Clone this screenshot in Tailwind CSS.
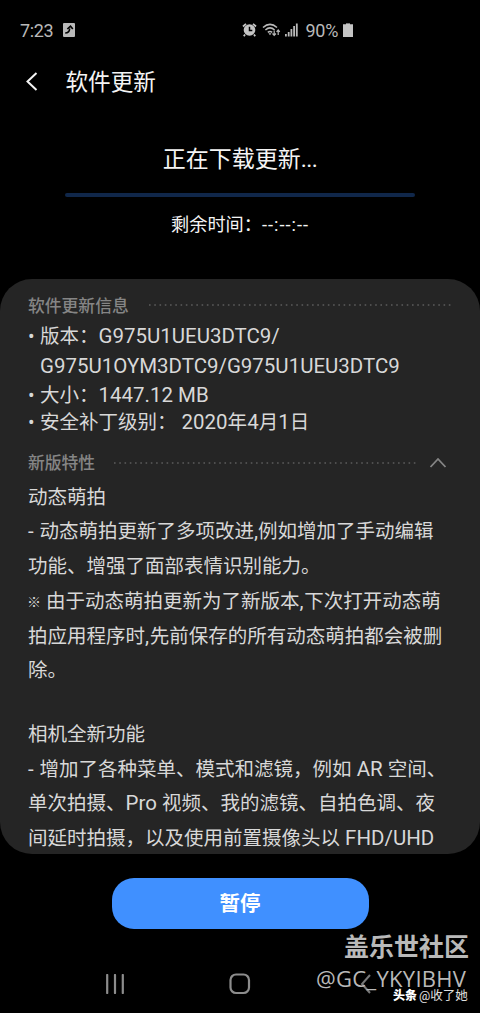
<!DOCTYPE html>
<html lang="zh-CN">
<head>
<meta charset="utf-8">
<title>软件更新</title>
<script src="https://cdn.jsdelivr.net/npm/@tailwindcss/browser@4"></script>
</head>
<body class="bg-black">
<div class="relative w-[480px] h-[1013px] bg-black overflow-hidden flex flex-col whitespace-nowrap font-[Roboto,'Noto_Sans_CJK_SC',sans-serif] text-[#d8d8d8]">
  <header class="h-[60px] flex items-center shrink-0 pl-5 text-[#b9b9b9]">
    <span class="w-[43px] text-[18px] tracking-[-0.4px]">7:23</span>
    <svg class="w-3 h-[14px]" viewBox="0 0 12 14"><rect width="12" height="14" rx="1" fill="#b9b9b9"/><path d="M2.2 10C5 10 6.5 8.5 6.7 5.5M4.3 6L7.5 3.2L9.8 6" fill="none" stroke="#000" stroke-width="1.6"/></svg>
    <svg class="w-[15px] h-4 ml-[167px]" viewBox="0 0 15 16"><circle cx="7.5" cy="8" r="5.8" fill="#c4c4c4"/><path d="M1 4.5L4 1.8M14 4.5L11 1.8M3 12.5L1.8 14.2M12 12.5L13.2 14.2" stroke="#c4c4c4" stroke-width="1.8"/><path d="M7.5 4.8V8.4H10.3" fill="none" stroke="#000" stroke-width="1.5"/></svg>
    <svg class="w-[19px] h-4 ml-[5px]" viewBox="0 0 19 16"><g fill="none" stroke="#b9b9b9" stroke-width="1.5"><path d="M1 5.5Q8 -0.8 15 5.5"/><path d="M3.4 8Q8 3.8 12.6 8"/><path d="M5.8 10.3Q8 8.5 10.2 10.3"/></g><path d="M6.5 11.3H9.5L8 13.3Z" fill="#b9b9b9"/><path d="M12.2 8.5V13M10.5 11.5L12.2 13.4L13.9 11.5M16.2 13V8.2M14.6 9.8L16.2 8L17.8 9.8" fill="none" stroke="#b9b9b9" stroke-width="1.2"/></svg>
    <svg class="w-[13px] h-[14px] ml-[4px]" viewBox="0 0 13 14" fill="#b9b9b9"><path d="M0 11h1.8v2.5H0zM2.8 9h1.8v4.500H2.800zM5.500 6h1.800v7.500H5.500zM8.200 3h1.800v10.500H8.200zM10.900 0.500h1.800v13H10.900z"/></svg>
    <span class="ml-[7.500px] w-[37px] text-[18px] tracking-[-0.3px]">90%</span>
    <svg class="w-[10px] h-[14px]" viewBox="0 0 10 14"><path d="M3 0H7V1.200H10V14H0V1.200H3Z" fill="#c4c4c4"/><path d="M3 0H7V1H3Z" fill="#777"/></svg>
  </header>
  <div class="h-[43px] flex items-center shrink-0 pl-[25px] text-[#f4f4f4]">
    <svg class="w-[13px] h-5" viewBox="0 0 13 20"><path d="M11.500 1L2.500 9.500L11.500 18" fill="none" stroke="#f4f4f4" stroke-width="2"/></svg>
    <h1 class="ml-[27.500px] pt-[3px] text-[22.6px]">软件更新</h1>
  </div>
  <section class="h-[176px] shrink-0 flex flex-col items-center text-[#f4f4f4]">
    <p class="mt-[39px] h-9 leading-9 text-[23px]">正在下载更新<span class="tracking-[-0.600px]">...</span></p>
    <div class="mt-[14.500px] h-1 w-[350px] rounded-full bg-[#10274a]"></div>
    <p class="mt-[12.500px] h-8 leading-8 text-[18.200px]">剩余时间：<span class="tracking-[1px]">--:--:--</span></p>
  </section>
  <main class="h-[575px] shrink-0 rounded-[32px] bg-[#252525] overflow-hidden pt-[10px] px-7 text-[19.500px] [&_i]:not-italic [&_i]:text-[1.050em] [&_i]:leading-none">
    <div class="h-8 flex items-center text-[16.800px] font-medium text-[#858585]">
      <h2 class="pt-[3px]">软件更新信息</h2>
      <svg class="ml-[20px] w-[303px] h-[2px]"><path d="M0 1H303" stroke="#5c5c5c" stroke-width="1.600" stroke-dasharray="1.600 3.660"/></svg>
    </div>
    <ul class="relative top-px">
      <li class="h-[30px] leading-[30px] flex"><span class="w-3">•</span><span>版本：<i>G975U1UEU3DTC9/</i></span></li>
      <li class="h-[30px] leading-[30px] pl-3"><i>G975U1OYM3DTC9/G975U1UEU3DTC9</i></li>
      <li class="h-[27px] leading-[27px] flex"><span class="w-3">•</span><span>大小：<i>1447.12 MB</i></span></li>
      <li class="h-[28px] leading-[28px] flex"><span class="w-3">•</span><span>安全补丁级别：<i> 2020</i>年<i>4</i>月<i>1</i>日</span></li>
    </ul>
    <div class="mt-[10px] h-[33px] flex items-center text-[16.800px] font-medium text-[#858585]">
      <h2 class="pt-[3px]">新版特性</h2>
      <svg class="ml-[19px] w-[303px] h-[2px]"><path d="M0 1H303" stroke="#5c5c5c" stroke-width="1.600" stroke-dasharray="1.600 3.660"/></svg>
      <svg class="ml-[12px] w-[18px] h-3" viewBox="0 0 18 12"><path d="M1.500 10L9 2L16.500 10" fill="none" stroke="#858585" stroke-width="1.800"/></svg>
    </div>
    <div class="pt-[1.500px] leading-[34.750px]">
      <p>动态萌拍</p>
      <p><i class="tracking-[0.400px]">- </i>动态萌拍更新了多项改进<i>,</i>例如增加了手动编辑</p>
      <p>功能、增强了面部表情识别能力。</p>
      <p class="flex"><span class="w-[18px] text-[14px] font-bold"><span class="relative -left-px">※</span></span><span>由于动态萌拍更新为了新版本<i class="tracking-[0.700px]">,</i>下次打开动态萌</span></p>
      <p>拍应用程序时<i class="tracking-[0.700px]">,</i>先前保存的所有动态萌拍都会被删</p>
      <p>除。</p>
      <p class="mt-[28.750px]">相机全新功能</p>
      <p><i class="tracking-[0.400px]">- </i>增加了各种菜单、模式和滤镜，例如<i> AR </i>空间、</p>
      <p>单次拍摄、<i>Pro </i>视频、我的滤镜、自拍色调、夜</p>
      <p>间延时拍摄，以及使用前置摄像头以<i> FHD/UHD</i></p>
    </div>
  </main>
  <button class="mt-[23.500px] ml-[111.500px] w-[257px] h-[51.500px] pt-[3px] shrink-0 rounded-[22px] bg-[#4090ff] text-white text-[20.500px] font-bold">暂停</button>
  <nav class="mt-[44px] h-[22px] shrink-0 flex items-center text-[#8c8c8c]">
    <svg class="ml-[105px] w-5 h-5" viewBox="0 0 20 20"><path d="M2.200 1V19M10 1V19M17.800 1V19" stroke="currentColor" stroke-width="2.200" stroke-linecap="round"/></svg>
    <svg class="ml-[104px] w-[22px] h-[22px]" viewBox="0 0 22 22"><rect x="1.500" y="1.500" width="18.500" height="18.500" rx="5.500" fill="none" stroke="currentColor" stroke-width="2.200"/></svg>
    <svg class="ml-[109px] w-3 h-5" viewBox="0 0 12 20"><path d="M10 1L2 10L10 19" fill="none" stroke="#777" stroke-width="2"/></svg>
  </nav>
  <div class="absolute right-[11px] top-[933px] h-[30px] leading-[30px] text-[25px] font-bold text-[#b9b9b9]">盖乐世社区</div>
  <div class="absolute left-[316px] top-[963px] h-[30px] leading-[30px] text-[22px] tracking-[0.300px] text-[#b9b9b9] font-['Open_Sans',sans-serif]">@GC_YKYIBHV</div>
  <div class="absolute left-[393px] top-[986px] h-5 leading-5 flex text-white"><span class="w-[26px] text-[12px] font-black">头条</span><span class="text-[12.500px] text-[#e0e0e0]">@收了她</span></div>
</div>
</body>
</html>
